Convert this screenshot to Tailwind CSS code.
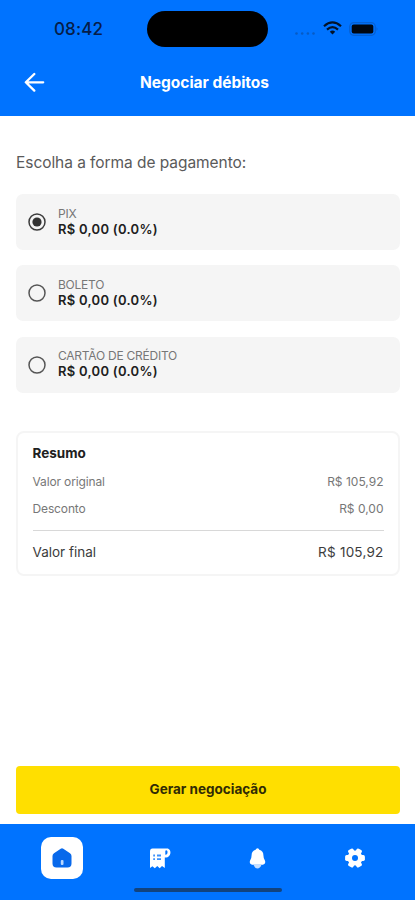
<!DOCTYPE html>
<html lang="pt-BR">
<head>
<meta charset="utf-8">
<meta name="viewport" content="width=device-width, initial-scale=1">
<title>Negociar débitos</title>
<script src="https://cdn.jsdelivr.net/npm/@tailwindcss/browser@4"></script>
</head>
<body class="bg-white">
<div class="flex h-[900px] w-[415px] flex-col overflow-hidden bg-white font-['Inter','Liberation_Sans',sans-serif]">
  <header class="h-[116px] shrink-0 bg-[#0073ff]">
    <div class="grid h-[58px] grid-cols-[147px_121px_147px] items-center">
      <span class="pl-[54px] text-[17px] leading-5 font-medium tracking-[0.15px] text-[#061d48]">08:42</span>
      <div class="h-9 rounded-full bg-black"></div>
      <div class="flex items-center pl-[27px]">
        <svg class="mt-[9px]" width="20" height="3" viewBox="0 0 20 3" fill="#075bc4"><circle cx="1.5" cy="1.5" r="1.3"/><circle cx="7.2" cy="1.5" r="1.3"/><circle cx="12.9" cy="1.5" r="1.3"/><circle cx="18.5" cy="1.5" r="1.3"/></svg>
        <svg class="-mt-[2px] ml-[8px]" width="19" height="14" viewBox="0 0 19 14" fill="none" stroke="#031327" stroke-width="2.2"><path d="M1 5.2Q9.5-2.4 18 5.2"/><path d="M4 8.6Q9.5 3.6 15 8.6"/><path d="M6.8 10.7Q9.5 8.4 12.2 10.7L9.5 13.4Z" fill="#031327" stroke="none"/></svg>
        <svg class="-mt-[1px] ml-[7px]" width="30" height="14" viewBox="0 0 30 14"><rect x=".7" y=".7" width="25.6" height="12.6" rx="4" fill="none" stroke="#0660d2" stroke-width="1.2"/><rect x="2.7" y="2.6" width="21.6" height="8.8" rx="2" fill="#000711"/><path d="M27.5 5Q29.5 7 27.5 9Z" fill="#0660d2"/></svg>
      </div>
    </div>
    <div class="grid h-12 grid-cols-[70px_1fr_70px] items-center">
      <svg class="ml-[24px]" width="22" height="20" viewBox="0 0 22 20" fill="none" stroke="#fff" stroke-width="2.3" stroke-linecap="round" stroke-linejoin="round"><path d="M10.3 2L1.8 10.3L10.3 18.6M2 10.3H19.2"/></svg>
      <h1 class="pt-[2px] pr-[6px] text-center text-[15.5px] leading-5 font-bold tracking-[-0.03px] whitespace-nowrap text-white">Negociar débitos</h1>
    </div>
  </header>

  <main class="flex min-h-0 flex-1 flex-col pt-[37px] pr-[15px] pb-[10px] pl-4">
    <p class="h-[41px] text-[15.5px] leading-5 tracking-[-0.06px] text-[#5a5a5a]">Escolha a forma de pagamento:</p>
    <div class="flex flex-col gap-[15.3px]">
      <label class="flex h-14 items-center gap-[12px] rounded-[7px] bg-[#f5f5f5] pl-3">
        <svg width="18" height="18" viewBox="0 0 18 18"><circle cx="9" cy="9" r="8" fill="none" stroke="#3c3c3c" stroke-width="1.5"/><circle cx="9" cy="9" r="4.6" fill="#333"/></svg>
        <span class="flex flex-col pb-[1px]"><span class="text-[12px] leading-4 tracking-[-0.24px] text-[#777]">PIX</span><span class="text-[13px] leading-[15.5px] font-semibold tracking-[0.28px] text-[#202020]">R$ 0,00 (0.0%)</span></span>
      </label>
      <label class="flex h-14 items-center gap-[12px] rounded-[7px] bg-[#f5f5f5] pl-3">
        <svg width="18" height="18" viewBox="0 0 18 18"><circle cx="9" cy="9" r="8" fill="none" stroke="#555" stroke-width="1.5"/></svg>
        <span class="flex flex-col pb-[1px]"><span class="text-[12px] leading-4 tracking-[-0.24px] text-[#777]">BOLETO</span><span class="text-[13px] leading-[15.5px] font-semibold tracking-[0.28px] text-[#202020]">R$ 0,00 (0.0%)</span></span>
      </label>
      <label class="flex h-14 items-center gap-[12px] rounded-[7px] bg-[#f5f5f5] pl-3">
        <svg width="18" height="18" viewBox="0 0 18 18"><circle cx="9" cy="9" r="8" fill="none" stroke="#555" stroke-width="1.5"/></svg>
        <span class="flex flex-col pb-[1px]"><span class="text-[12px] leading-4 tracking-[-0.24px] text-[#777]">CARTÃO DE CRÉDITO</span><span class="text-[13px] leading-[15.5px] font-semibold tracking-[0.28px] text-[#202020]">R$ 0,00 (0.0%)</span></span>
      </label>
    </div>

    <section class="mt-[38.4px] h-[145px] rounded-[8px] border-2 border-[#f5f5f5] px-[14.5px] pt-[10px]">
      <h2 class="text-[13.5px] leading-5 font-bold text-[#202020]">Resumo</h2>
      <div class="mt-[9px] flex justify-between text-[12px] leading-5 text-[#777]"><span class="tracking-[-0.13px]">Valor original</span><span>R$ 105,92</span></div>
      <div class="mt-[7px] flex justify-between text-[12px] leading-5 text-[#777]"><span class="tracking-[-0.13px]">Desconto</span><span>R$ 0,00</span></div>
      <div class="mt-[11px] flex justify-between border-t border-[#d8d8d8] pt-[11px] text-[13.5px] leading-5 text-[#3c3c3c]"><span>Valor final</span><span class="tracking-[0.22px]">R$ 105,92</span></div>
    </section>

    <button class="mt-auto h-[48px] shrink-0 rounded-[4px] bg-[#ffdf00] text-[13.5px] font-bold text-[#302b05]">Gerar negociação</button>
  </main>

  <nav class="relative h-[76.5px] shrink-0 bg-[#0073ff] px-[13px] pt-[13.5px]">
    <div class="grid h-[42px] grid-cols-[98px_97.5px_97.5px_97px] place-items-center">
      <div class="flex size-[42px] items-center justify-center rounded-[10px] bg-white">
        <svg width="20" height="20" viewBox="0 0 20 20"><path d="M8.7.8Q10-.1 11.3.8L18 5.2Q19.5 6.2 19.5 8V15.5Q19.5 19.5 15.5 19.5H4.5Q.5 19.5 .5 15.5V8Q.5 6.2 2 5.2Z" fill="#0869eb"/><rect x="8.8" y="12" width="2.7" height="5" rx="1" fill="#b8d7ff"/></svg>
      </div>
      <svg width="22" height="21" viewBox="0 0 22 21"><path d="M3.5.5H18C20.5.5 21.7 3 21.4 5.2C21 8 19 9.5 17 9.4H15.8V20L13 18.1L10.7 20.3L8.3 18.1L5.8 20.3L3.4 18.2L1 20V3.5Q1 .5 3.5.5Z" fill="#fff"/><path d="M16.3 6.8V3.5Q16.3 2.2 17.4 2.3Q18.9 2.5 18.5 5Q18.1 7 16.3 6.8Z" fill="#0073ff"/><path d="M4.2 7.5H6M8 7.5H12M4.2 11.2H6M8 11.2H12" stroke="#3d91fb" stroke-width="1.8"/></svg>
      <svg width="17" height="21" viewBox="0 0 17 21"><path d="M8.5.3Q10 .3 10.3 1.8Q14.4 3.2 14.4 7.3Q14.4 10.4 15.9 12.4Q17.2 15.8 14 16.8H3Q-.2 15.8 1.1 12.4Q2.6 10.4 2.6 7.3Q2.6 3.2 6.7 1.8Q7 .3 8.5.3Z" fill="#fff"/><path d="M4.5 16.8H12.5Q11 20.6 8.5 20.6Q6 20.6 4.5 16.8Z" fill="#c7dfff"/></svg>
      <svg width="20" height="20" viewBox="0 0 20 20"><g fill="#fff"><circle cx="10" cy="10" r="7.6"/><rect x="7.1" y=".1" width="5.8" height="19.8" rx="1.6" transform="rotate(30 10 10)"/><rect x="7.1" y=".1" width="5.8" height="19.8" rx="1.6" transform="rotate(90 10 10)"/><rect x="7.1" y=".1" width="5.8" height="19.8" rx="1.6" transform="rotate(150 10 10)"/></g><circle cx="10" cy="10" r="3" fill="#0073ff"/></svg>
    </div>
    <div class="absolute bottom-[8px] left-[134px] h-[4px] w-[148px] rounded-full bg-[#12437e]"></div>
  </nav>
</div>
</body>
</html>
